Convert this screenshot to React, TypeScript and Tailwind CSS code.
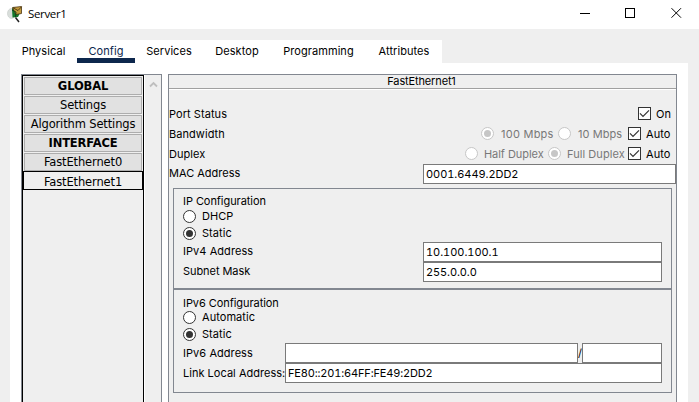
import React from "react";

const box = "border border-[#828790]";

function Label({ children, className = "" }: { children: React.ReactNode; className?: string }) {
  return <span className={`whitespace-nowrap leading-none ${className}`}>{children}</span>;
}

function Radio({ checked = false, disabled = false }: { checked?: boolean; disabled?: boolean }) {
  return (
    <svg width="13" height="13" viewBox="0 0 13 13" className={`block shrink-0 ${disabled ? "mb-px" : ""}`}>
      <circle cx="6.5" cy="6.5" r="6" fill="#fff" stroke={disabled ? "#c6c6c6" : "#333"} />
      {checked && <circle cx="6.5" cy="6.5" r="3.5" fill={disabled ? "#c6c6c6" : "#333"} />}
    </svg>
  );
}

function Check() {
  return (
    <svg width="13" height="13" viewBox="0 0 13 13" className="mb-px block shrink-0">
      <rect x="0.5" y="0.5" width="12" height="12" fill="#fff" stroke="#333" />
      <path d="M2 6.3 L5 9.3 L11 3.3" fill="none" stroke="#333" strokeWidth="1.2" />
    </svg>
  );
}

function Field({ value = "", className = "" }: { value?: string; className?: string }) {
  return (
    <div className={`flex h-5 shrink-0 items-center whitespace-nowrap border border-[#7a7a7a] bg-white pl-[2px] leading-none tabular-nums ${className}`}>
      {value}
    </div>
  );
}

function Option({ text, checked = false }: { text: string; checked?: boolean }) {
  return (
    <div className="flex h-[17px] items-center gap-[6px]">
      <Radio checked={checked} />
      <Label>{text}</Label>
    </div>
  );
}

const tabs = [
  { name: "Physical", width: "w-[67px]" },
  { name: "Config", width: "w-[58px]" },
  { name: "Services", width: "w-[68px]" },
  { name: "Desktop", width: "w-[68px]" },
  { name: "Programming", width: "w-[95px]" },
  { name: "Attributes", width: "w-[76px]" },
];

const menu = [
  { name: "GLOBAL", bold: true },
  { name: "Settings", bold: false },
  { name: "Algorithm Settings", bold: false },
  { name: "INTERFACE", bold: true },
  { name: "FastEthernet0", bold: false },
];

function TitleBar() {
  return (
    <header className="flex h-[29px] items-center bg-white pl-[6px] font-['Open_Sans',sans-serif] text-[11.5px]">
      <svg width="18" height="18" viewBox="0 0 18 18" className="-mt-[2px]">
        <ellipse cx="5.500" cy="8.500" rx="4" ry="5" fill="#d9dedb" stroke="#c4cac6" strokeWidth="0.6" />
        <path d="M6 3.500 L9 2 L14 8 L12 12 L6.500 12.500Z" fill="#14782a" />
        <path d="M6.500 2.500 L15.500 1.500 L15.500 8.500 L10 9.500 L8 6Z" fill="#c39a3c" stroke="#4b3511" strokeWidth="0.8" />
        <path d="M7 2.800 L12 5.500 L15.500 1.800" fill="none" stroke="#4b3511" strokeWidth="0.9" />
        <path d="M6 5 L10 7 L9.500 12" fill="none" stroke="#0b3d17" strokeWidth="0.9" />
        <path d="M9.500 12.500 L13 17" stroke="#222" strokeWidth="1.5" />
      </svg>
      <span className="-mt-[2px] ml-1 tracking-[-0.35px]">Server1</span>
      <div className="mr-[17px] mb-[3px] ml-auto flex items-center">
        <svg width="10" height="10" viewBox="0 0 10 10" className="mr-[35px]"><path d="M0 5.500H10" stroke="#000" /></svg>
        <svg width="10" height="10" viewBox="0 0 10 10" className="mr-9"><rect x="0.5" y="0.5" width="9" height="9" fill="none" stroke="#000" /></svg>
        <svg width="11" height="10" viewBox="0 0 11 10"><path d="M0.500 0.200L10 9.700M10 0.200L0.500 9.700" stroke="#000" /></svg>
      </div>
    </header>
  );
}

function Sidebar() {
  return (
    <aside className={`flex w-[141px] border-b-0 bg-[#efefef] ${box}`}>
      <div className="flex w-[122px] flex-col border border-b-0 border-black px-px pt-px font-['DejaVu_Sans',sans-serif] text-[11.5px] tracking-[-0.14px]">
        <div className="flex flex-col gap-px">
          {menu.map((item) => (
            <div
              key={item.name}
              className={`flex h-[18px] items-center justify-center whitespace-nowrap border border-[#adadad] bg-[#e1e1e1] pt-px leading-none ${item.bold ? "font-bold" : ""}`}
            >
              {item.name}
            </div>
          ))}
        </div>
        <div className="-mx-px flex h-[19px] items-center justify-center border border-black pt-[4px] leading-none">FastEthernet1</div>
      </div>
      <div className="flex flex-1 justify-center border-l border-white pt-[6px]">
        <svg width="9" height="7" viewBox="0 0 9 7"><path d="M1 5.500L4.500 2L8 5.500" fill="none" stroke="#bfbfbf" strokeWidth="1.8" /></svg>
      </div>
    </aside>
  );
}

function ConfigPanel() {
  return (
    <main className={`flex w-[509px] flex-col border-b-0 bg-[#efefef] ${box}`}>
      <div className="flex h-[14px] shrink-0 items-center justify-center border-b border-[#a0a0a0]">
        <Label className="mr-[2px] tracking-[-0.14px]">FastEthernet1</Label>
      </div>
      <div className="h-px bg-white" />
      <div className="pt-[14px]">
        <div className="flex h-5 items-center pr-[5px]">
          <Label className="pt-px">Port Status</Label>
          <div className="ml-auto flex items-center"><Check /><Label className="ml-[5px] w-[15px] pt-px">On</Label></div>
        </div>
        <div className="flex h-5 items-center pr-[5px]">
          <Label className="pt-px">Bandwidth</Label>
          <div className="ml-auto flex items-center text-[#787878]">
            <Radio checked disabled />
            <Label className="ml-[7px] w-[57px] pt-px tracking-[0.25px]">100 Mbps</Label>
            <Radio disabled />
            <Label className="ml-[7px] w-[50px] pt-px">10 Mbps</Label>
            <Check />
            <Label className="ml-[5px] w-[25px] pt-px text-black">Auto</Label>
          </div>
        </div>
        <div className="flex h-5 items-center pr-[5px]">
          <Label className="pt-px">Duplex</Label>
          <div className="ml-auto flex items-center text-[#787878]">
            <Radio disabled />
            <Label className="ml-[6px] w-[64px] pt-px tracking-[-0.05px]">Half Duplex</Label>
            <Radio checked disabled />
            <Label className="ml-[6px] w-[61px] pt-px">Full Duplex</Label>
            <Check />
            <Label className="ml-[5px] w-[25px] pt-px text-black">Auto</Label>
          </div>
        </div>
        <div className="flex h-5 items-center justify-between">
          <Label className="pb-px tracking-normal">MAC Address</Label>
          <Field value="0001.6449.2DD2" className="w-[253px] tracking-[-0.05px]" />
        </div>
      </div>
      <section className={`mt-1 ml-1 h-[101px] w-[499px] shrink-0 px-[9px] pt-1 ${box}`}>
        <div className="flex h-[15px] items-center pt-[2px]"><Label className="tracking-[-0.06px]">IP Configuration</Label></div>
        <Option text="DHCP" />
        <Option text="Static" checked />
        <div className="flex h-5 items-center justify-between">
          <Label className="pb-px">IPv4 Address</Label>
          <Field value="10.100.100.1" className="w-[239px] tracking-[-0.04px]" />
        </div>
        <div className="flex h-5 items-center justify-between">
          <Label className="pb-px tracking-[-0.06px]">Subnet Mask</Label>
          <Field value="255.0.0.0" className="w-[239px] tracking-[-0.1px]" />
        </div>
      </section>
      <section className={`ml-1 h-[104px] w-[499px] shrink-0 px-[9px] pt-1 ${box}`}>
        <div className="flex h-[15px] items-center pt-[3px]"><Label className="tracking-[-0.06px]">IPv6 Configuration</Label></div>
        <Option text="Automatic" />
        <Option text="Static" checked />
        <div className="flex h-5 items-center">
          <Label className="w-[102px] pt-px">IPv6 Address</Label>
          <Field className="w-[293px]" />
          <Label className="w-1 pt-px">/</Label>
          <Field className="w-[80px]" />
        </div>
        <div className="flex h-5 items-center">
          <Label className="w-[102px] pt-px tracking-[0.02px]">Link Local Address:</Label>
          <Field value="FE80::201:64FF:FE49:2DD2" className="w-[377px] tracking-[-0.16px]" />
        </div>
      </section>
    </main>
  );
}

export default function App() {
  return (
    <div className="flex h-[402px] w-[699px] flex-col overflow-hidden bg-[#efefef] font-['Inter',sans-serif] text-[11px] tracking-[0.06px] text-black">
      <TitleBar />
      <nav className="mt-[11px] ml-[10px] flex h-[23px] w-[432px] bg-white">
        {tabs.map((tab) => (
          <div
            key={tab.name}
            className={`flex h-[23px] items-center justify-center whitespace-nowrap leading-none ${tab.width} ${tab.name === "Config" ? "border-b-[5px] border-[#0d274d] pt-[5px] text-[#0d274d]" : "pt-[5px] pb-[5px]"}`}
          >
            {tab.name}
          </div>
        ))}
      </nav>
      <div className="ml-[10px] flex w-[678px] flex-1 items-stretch gap-[6px] bg-white pt-[11px] pl-[11px]">
        <Sidebar />
        <ConfigPanel />
      </div>
    </div>
  );
}
